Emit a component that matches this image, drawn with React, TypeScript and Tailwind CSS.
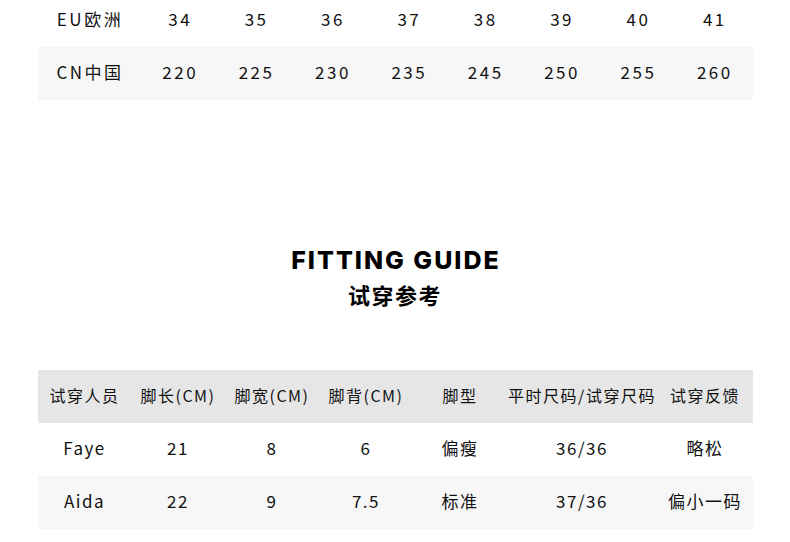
import React from "react";

const eu = ["34", "35", "36", "37", "38", "39", "40", "41"];
const cn = ["220", "225", "230", "235", "245", "250", "255", "260"];

const headers = ["试穿人员", "脚长(CM)", "脚宽(CM)", "脚背(CM)", "脚型", "平时尺码/试穿尺码", "试穿反馈"];
const widths = ["w-[93px]", "w-[94px]", "w-[94px]", "w-[94px]", "w-[94px]", "w-[150px]", "w-[96px]"];
const rows = [
  ["Faye", "21", "8", "6", "偏瘦", "36/36", "略松"],
  ["Aida", "22", "9", "7.5", "标准", "37/36", "偏小一码"],
];

export default function App() {
  return (
    <div
      className="w-[790px] h-[542px] bg-white overflow-hidden text-[#111111]"
      style={{ fontFamily: '"Noto Sans CJK SC", "Noto Sans", sans-serif' }}
    >
      <div className="mx-[38px] w-[715px] mt-[-6px] text-[17px] tracking-[2.5px]">
        <div className="flex h-[53px] items-center bg-white pb-[3px]">
          <div className="w-[104px] text-center">EU欧洲</div>
          {eu.map((v) => (
            <div key={v} className="flex-1 text-center">{v}</div>
          ))}
        </div>
        <div className="flex h-[53px] items-center bg-[#f7f7f7] pb-[3px]">
          <div className="w-[104px] text-center">CN中国</div>
          {cn.map((v) => (
            <div key={v} className="flex-1 text-center">{v}</div>
          ))}
        </div>
      </div>

      <div className="mt-[145px] flex flex-col items-center">
        <div
          className="text-[25px] font-extrabold leading-[30px] tracking-[2px] text-black pl-[2px]"
          style={{ fontFamily: 'Inter, "Noto Sans", sans-serif' }}
        >
          FITTING GUIDE
        </div>
        <div className="mt-[4px] text-[22px] font-bold leading-[30px] tracking-[1.5px] text-black">试穿参考</div>
      </div>

      <div className="mx-[38px] w-[715px] mt-[61px] text-[16px] tracking-[1.5px]">
        <div className="flex h-[53px] items-center bg-[#e6e6e6] pb-[3px]">
          {headers.map((h, i) => (
            <div key={h} className={`${widths[i]} text-center whitespace-nowrap`}>{h}</div>
          ))}
        </div>
        {rows.map((r, ri) => (
          <div key={ri} className={`flex h-[53px] items-center pb-[3px] ${ri === 1 ? "bg-[#f7f7f7]" : "bg-white"} text-[17px]`}>
            {r.map((c, i) => (
              <div key={i} className={`${widths[i]} text-center whitespace-nowrap`}>{c}</div>
            ))}
          </div>
        ))}
      </div>
    </div>
  );
}
